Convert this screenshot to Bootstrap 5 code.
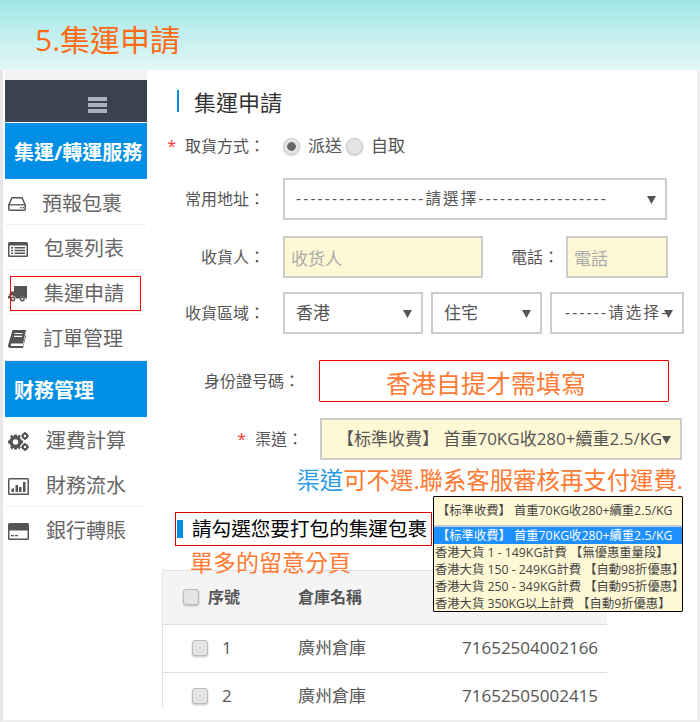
<!DOCTYPE html>
<html lang="zh-Hant">
<head>
<meta charset="utf-8">
<title>集運申請</title>
<link rel="stylesheet" href="https://cdn.jsdelivr.net/npm/bootstrap@5.3.0/dist/css/bootstrap.min.css">
<style>
html,body{height:722px;overflow:hidden;background:#fff}
body{font-family:"Open Sans","Noto Sans CJK TC",sans-serif;color:#555;font-size:16px}
.pagewrap{width:700px;height:722px;overflow:hidden}
.topband{height:70px;background:linear-gradient(#a2e6e6,#e2f7f7);padding-left:35px;font-size:30px;line-height:80px;color:#ff6a13}
.shell{height:652px;border-left:3px solid #ebe5e8;border-right:3px solid #eee;border-bottom:2px solid #eee;padding-left:2px}
.sidecol{width:142px;flex:none}
.sidecap{height:10px;background:#f3f3f3}
.burger{height:42px;background:#39424f;padding:17px 40px 0 0;margin-bottom:1px}
.burger i{display:block;width:19px;height:3.5px;background:#aab2bd;margin-bottom:2.5px}
.sidehead{height:56px;background:#008fe5;color:#fff;font-weight:700;font-size:20px;line-height:60px;padding-left:9px;white-space:nowrap}
.sidehead.gapped{margin-bottom:1px}
.sideitem{height:45px;display:flex;align-items:center;font-size:20px;color:#666;border-bottom:1px solid #f2f2f2;padding:4px 0 0 3px;position:relative;white-space:nowrap}
.sideitem.noline{border-bottom-color:transparent}
.sideitem svg{flex:none;fill:#555}
.redmark{position:absolute;left:5px;top:6px;width:131px;height:35px;border:1px solid #f00}
.endgap{height:1px;background:#eee}
.maincol{flex:1;padding:20px 0 0 0;position:relative;min-width:0}
.pagehead{height:22px;margin-left:30px;border-left:2px solid #008fe5;padding-left:15px;font-size:22px;line-height:24px;color:#333}
.formline{display:flex;align-items:center;height:42px}
.fieldname{width:136px;flex:none;text-align:right;padding-right:18px;color:#555;white-space:nowrap}
.fieldname.wide{width:172px;padding-right:19px}
.fieldname.wider{width:173px;padding-right:17px}
.must{color:#f33;margin-right:9px}
.lineone{margin-top:14px;height:40px;font-size:17px}
.lineone .fieldname{font-size:16px}
.linetwo{margin-top:12px}
.linethree{margin-top:16px}
.linefour{margin-top:14px}
.linefive{margin-top:26px}
.linesix{margin-top:16px}
.plainbox,.plainbox:focus{height:42px;border:2px solid #ccc;border-radius:0;color:#555;font-size:17px;padding:0 11px;box-shadow:none;background-color:#fff;background-image:url("data:image/svg+xml,%3Csvg xmlns='http://www.w3.org/2000/svg' width='9' height='9'%3E%3Cpath d='M0 1h9L4.500 9z' fill='%23555'/%3E%3C/svg%3E");background-repeat:no-repeat;background-position:right 9px center;background-size:9px 9px;font-family:inherit}
.dashed,.dashed:focus{font-size:15.5px;letter-spacing:2.2px}
.yellowbox,.yellowbox:focus{background-color:#fff8d5}
.textbox,.textbox:focus{height:42px;border:2px solid #ccc;border-radius:0;background:#fff8d5;padding:2px 6px 0;font-size:17px;box-shadow:none}
.textbox::placeholder{color:#aaa}
.w200{width:200px;flex:none}
.w102{width:102px;flex:none}
.w384{width:384px;flex:none}
.w140{width:140px;flex:none}
.w111{width:111px;flex:none;margin-left:8px}
.w134{width:134px;flex:none;margin-left:8px;padding-left:13px;padding-right:14px}
.w362{width:362px;flex:none;padding-left:15px;padding-right:19px}
.idbox{width:350px;height:42px;border:1px solid #e00;border-radius:1px;flex:none;font-size:25px;color:#ff7a33;text-align:center;line-height:44px;padding-right:16px}
.tel{margin-left:28px;margin-right:7px;color:#555;white-space:nowrap}
.dot{appearance:none;width:17px;height:17px;border-radius:50%;background:#e4e4e4;border:1px solid #c8c8c8;box-shadow:0 1px 2px rgba(0,0,0,.2);display:block;flex:none;margin:0}
.dot:checked{background:radial-gradient(circle,#666 0,#666 4px,#e4e4e4 4.6px)}
.note{margin-top:8px;height:24px;line-height:24px;font-size:23.4px;text-align:right;padding-right:14px;color:#ff7a33;white-space:nowrap}
.note span{color:#2a9be6}
.pickbar{width:257px;height:34px;margin:20px 0 0 28px;border:1px solid #d00;display:flex;align-items:center;color:#000;font-size:19.6px;white-space:nowrap;padding-left:1px}
.pickbar i{width:6px;height:18px;background:#008fe5;margin-right:9px;flex:none}
.hint{margin:6px 0 0 43px;height:18px;line-height:20px;font-size:23px;color:#ff7a33}
.tablewrap{width:445px;height:138px;margin-left:15px;overflow:hidden;border-left:1px solid #e4e4e4}
.pkgtable{table-layout:fixed;width:444px;margin:0;color:#555}
.pkgtable th{background:#f4f4f4;height:54px;border-top:1px solid #e0e0e0;border-bottom:1px solid #ddd;padding:0 0 2px;vertical-align:middle;font-size:16px;color:#555}
.pkgtable td{height:48px;border-bottom:1px solid #ddd;padding:0 0 2px;vertical-align:middle;font-size:17px;color:#555;white-space:nowrap}
.boxcell{display:flex;align-items:center}
.boxcell.h{padding-left:20px;gap:9px}
.boxcell.r{padding-left:29px;gap:14px}
.tick{appearance:none;width:16px;height:16px;border:1px solid #bbb;border-radius:3px;background:#e4e4e4;box-shadow:0 1px 2px rgba(0,0,0,.25);margin:0;flex:none;display:block}
.dropmenu{position:absolute;left:286px;top:426px;width:250px;height:116px;border:1px solid #000;background:#fff8d5;font-size:12.3px;line-height:17px;color:#444;white-space:nowrap;overflow:hidden;border-radius:1px}
.dropmenu .picked0{height:30px;line-height:28px;padding-left:3px;border-bottom:2px solid #c4c9d4}
.dropmenu .optrow{height:17px;padding-left:1px}
.dropmenu .optrow.on{background:#1e90ff;color:#fff;padding-left:3px;margin-top:0}
</style>
</head>
<body>
<div class="pagewrap">
  <div class="topband">5.集運申請</div>
  <div class="shell d-flex">
    <aside class="sidecol">
      <div class="sidecap"></div>
      <div class="burger d-flex flex-column align-items-end"><i></i><i></i><i></i></div>
      <div class="sidehead gapped">集運/轉運服務</div>
      <div class="sideitem"><svg width="18" height="14" viewBox="0 0 18 14" style="margin-right:16px"><path d="M4 .8h10l3.200 7v4.400a1 1 0 0 1-1 1H1.800a1 1 0 0 1-1-1V7.800z" fill="none" stroke="#555" stroke-width="1.500"/><path d="M1 7.800h16" stroke="#555" stroke-width="1.300"/><path d="M12 10h1.500v1.300H12zM14.500 10H16v1.300h-1.500z"/></svg>預報包裹</div>
      <div class="sideitem"><svg width="20" height="15" viewBox="0 0 20 15" style="margin-right:16px"><rect width="20" height="15" rx="1.500"/><rect x="1.500" y="3.500" width="17" height="10" fill="#fff"/><path d="M3 5h2v1.500H3zM3 7.700h2v1.500H3zM3 10.400h2v1.500H3zM6.500 5H17v1.500H6.500zM6.500 7.700H17v1.500H6.500zM6.500 10.400H17v1.500H6.500z"/></svg>包裹列表</div>
      <div class="sideitem"><svg width="19" height="16" viewBox="0 0 19 16" style="margin-right:17px"><path d="M6 0h13v12.500h-2a2.800 2.800 0 0 0-5.400 0H8a2.800 2.800 0 0 0-3-2.300L6 9zM0.500 9.500 3 5.500h3V9.500zM0 10h2.500A3 3 0 0 0 2 12.500H0z"/><circle cx="4.800" cy="13" r="2.500"/><circle cx="14.300" cy="13" r="2.500"/><circle cx="4.800" cy="13" r="1" fill="#fff"/><circle cx="14.300" cy="13" r="1" fill="#fff"/></svg>集運申請<span class="redmark"></span></div>
      <div class="sideitem noline"><svg width="18" height="18" viewBox="0 0 18 18" style="margin-right:17px"><path d="M4.500 0H18l-3 13.500H3.500A2 2 0 0 0 3 16h12l2.500-11 .5 1-3 12H2.500A2.500 2.500 0 0 1 0 15.500z"/><path d="M6.500 3.500h8M6 6.300h8" stroke="#fff" stroke-width="1.200"/></svg>訂單管理</div>
      <div class="endgap"></div>
      <div class="sidehead">财務管理</div>
      <div class="sideitem noline"><svg width="21" height="19" viewBox="0 0 21 19" style="margin-right:17px"><circle cx="7.500" cy="10" r="4.500" fill="none" stroke="#555" stroke-width="3.500"/><path d="M6 2.500h3v3H6zM6 14.500h3v3H6zM0 8.500h3v3H0zM12 8.500h3v3h-3z"/><path d="M2 4.500 4 2.500 6 5 4.500 6.500zM2 15.500 4 17.500 6 15 4.500 13.500zM13 4.500 11 2.500 9 5 10.500 6.500zM13 15.500 11 17.500 9 15 10.500 13.500z"/><circle cx="17" cy="4" r="2.200" fill="none" stroke="#555" stroke-width="2"/><circle cx="17" cy="15" r="2.200" fill="none" stroke="#555" stroke-width="2"/><path d="M16.200 0h1.600v1.500h-1.600zM16.200 6.500h1.600V8h-1.600zM13.200 3.200h1.300v1.600h-1.300zM19.500 3.200H21v1.600h-1.500zM16.200 11h1.600v1.500h-1.600zM16.200 17.500h1.600V19h-1.600zM13.200 14.200h1.300v1.600h-1.300zM19.500 14.200H21v1.600h-1.500z"/></svg>運費計算</div>
      <div class="sideitem"><svg width="21" height="17" viewBox="0 0 21 17" style="margin-right:17px"><rect width="21" height="17" rx="1.500"/><rect x="1.500" y="1.500" width="18" height="14" fill="#fff"/><path d="M3.500 10.500h2.500v3.500H3.500zM7.500 7h2.500v7H7.500zM11 9h2.500v5H11zM15 4h2.500v10H15z"/></svg>財務流水</div>
      <div class="sideitem noline"><svg width="21" height="17" viewBox="0 0 21 17" style="margin-right:17px"><rect width="21" height="17" rx="1.500"/><rect x="1.500" y="7.500" width="18" height="8" fill="#fff"/><path d="M3 12h3v1.300H3zM7 12h3v1.300H7z"/></svg>銀行轉賬</div>
    </aside>
    <main class="maincol">
      <div class="pagehead">集運申請</div>
      <div class="formline lineone">
        <div class="fieldname"><span class="must">*</span>取貨方式：</div>
        <input type="radio" class="dot" name="pick" checked><span class="ms-2">派送</span>
        <input type="radio" class="dot ms-1" name="pick"><span class="ms-2">自取</span>
      </div>
      <div class="formline linetwo">
        <div class="fieldname">常用地址：</div>
        <select class="form-select plainbox dashed w384"><option>------------------請選擇------------------</option></select>
      </div>
      <div class="formline linethree">
        <div class="fieldname">收貨人：</div>
        <input class="form-control textbox w200" placeholder="收货人">
        <span class="tel">電話：</span>
        <input class="form-control textbox w102" placeholder="電話">
      </div>
      <div class="formline linefour">
        <div class="fieldname">收貨區域：</div>
        <select class="form-select plainbox w140"><option>香港</option></select>
        <select class="form-select plainbox w111"><option>住宅</option></select>
        <select class="form-select plainbox dashed w134"><option>------请选择------</option></select>
      </div>
      <div class="formline linefive">
        <div class="fieldname wide">身份證号碼：</div>
        <div class="idbox">香港自提才需填寫</div>
      </div>
      <div class="formline linesix">
        <div class="fieldname wider"><span class="must">*</span>渠道：</div>
        <select class="form-select plainbox yellowbox w362"><option>【标準收費】 首重70KG收280+續重2.5/KG</option></select>
      </div>
      <div class="note"><span>渠道</span>可不選.聯系客服審核再支付運費.</div>
      <div class="pickbar"><i></i>請勾選您要打包的集運包裹</div>
      <div class="hint">單多的留意分頁</div>
      <div class="tablewrap">
        <table class="table pkgtable">
          <colgroup><col style="width:135px"><col style="width:164px"><col style="width:145px"></colgroup>
          <thead><tr><th><div class="boxcell h"><input type="checkbox" class="tick">序號</div></th><th>倉庫名稱</th><th></th></tr></thead>
          <tbody>
            <tr><td><div class="boxcell r"><input type="checkbox" class="tick">1</div></td><td>廣州倉庫</td><td>71652504002166</td></tr>
            <tr><td><div class="boxcell r"><input type="checkbox" class="tick">2</div></td><td>廣州倉庫</td><td>71652505002415</td></tr>
          </tbody>
        </table>
      </div>
      <div class="dropmenu">
        <div class="picked0">【标準收費】 首重70KG收280+續重2.5/KG</div>
        <div class="optrow on">【标準收費】 首重70KG收280+續重2.5/KG</div>
        <div class="optrow">香港大貨 1 - 149KG計費 【無優惠重量段】</div>
        <div class="optrow">香港大貨 150 - 249KG計費 【自動98折優惠】</div>
        <div class="optrow">香港大貨 250 - 349KG計費 【自動95折優惠】</div>
        <div class="optrow">香港大貨 350KG以上計費 【自動9折優惠】</div>
      </div>
    </main>
  </div>
</div>
<script src="https://cdn.jsdelivr.net/npm/bootstrap@5.3.0/dist/js/bootstrap.bundle.min.js"></script>
</body>
</html>
